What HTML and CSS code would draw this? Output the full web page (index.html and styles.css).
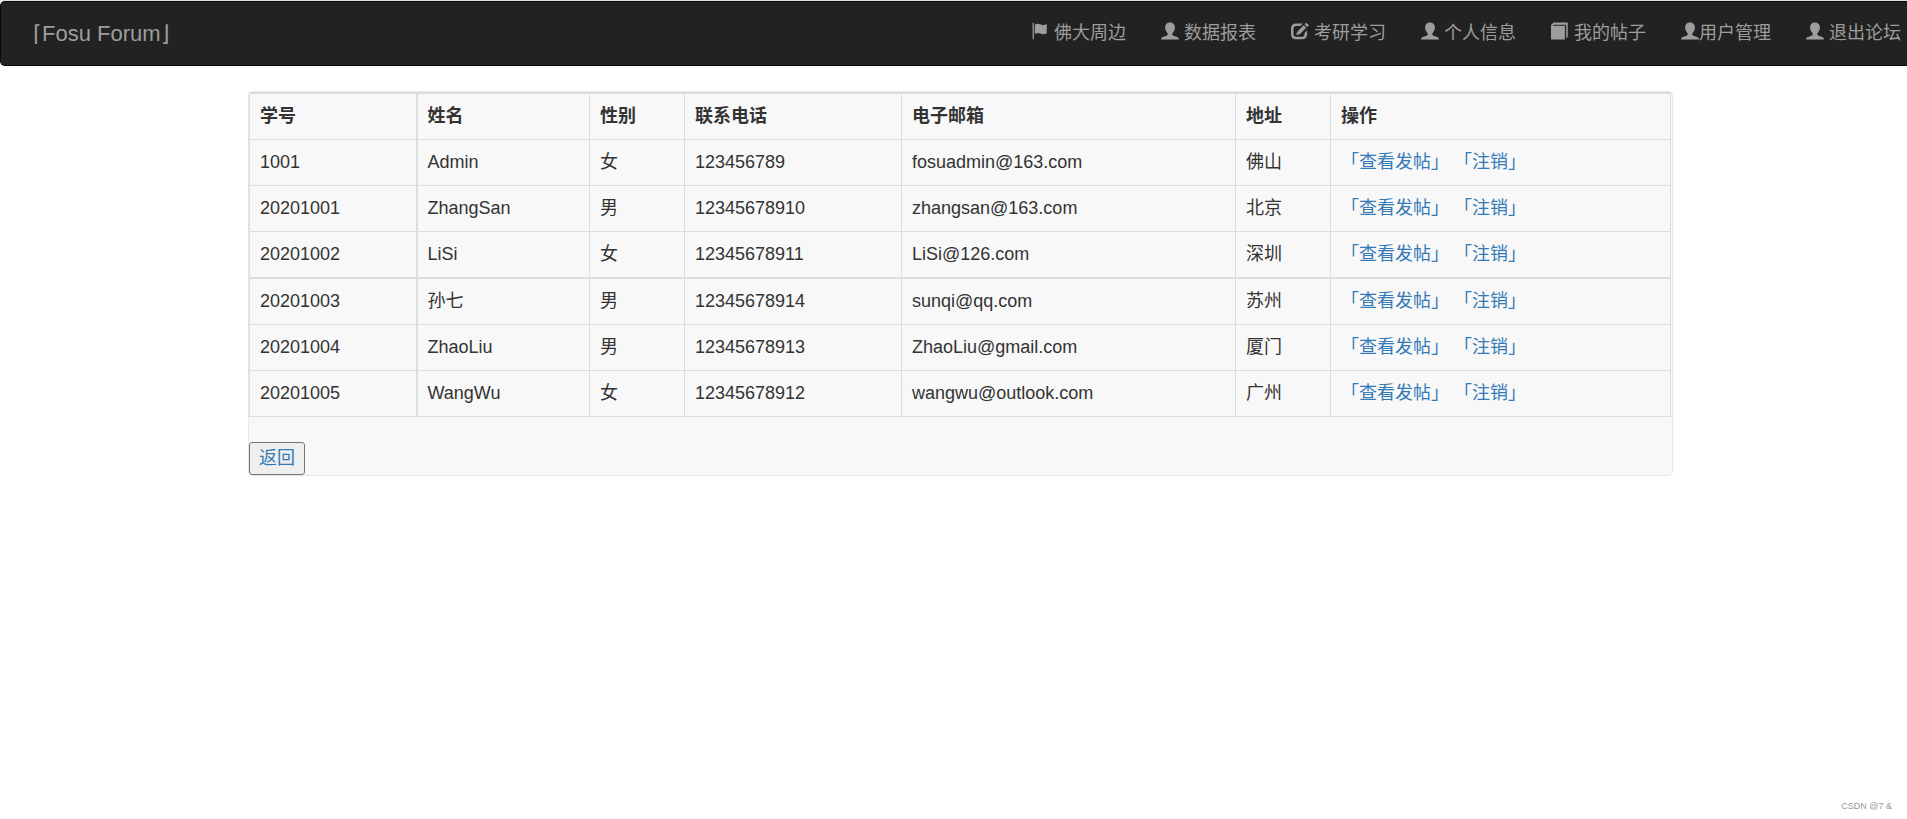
FILE: index.html
```html
<!DOCTYPE html>
<html lang="zh-CN">
<head>
<meta charset="utf-8">
<title>Fosu Forum</title>
<link rel="stylesheet" href="styles.css">
</head>
<body>
<svg class="sprite" aria-hidden="true">
  <symbol id="icon-user" viewBox="0 0 57 54"><path d="M28 0C19 0 13 6 13 15c0 8 3 14 8 19v4c0 3-3 4-6 5L6 46c-4 2-6 4-6 8h57c0-4-2-6-6-8l-9-3c-3-1-6-2-6-5v-4c5-5 8-11 8-19C44 6 37 0 28 0z"/></symbol>
  <symbol id="icon-flag" viewBox="0 0 57 54"><path d="M5 1h4v52H5zM12 7c5-4 11-4 17-1s12 4 21-1v29c-8 4-13 4-20 1s-12-3-18 2z"/></symbol>
  <symbol id="icon-edit" viewBox="0 0 57 54"><path d="M38 3H16C6 3 0 9 0 19v18c0 10 6 16 16 16h19c10 0 16-6 16-16V25l-8 8v4c0 5-3 8-8 8H16c-5 0-8-3-8-8V19c0-5 3-8 8-8h14zM40 9l8 8-20 20-12 3 4-11zM48 1l9 8-6 6-8-9z"/></symbol>
  <symbol id="icon-book" viewBox="0 0 57 54"><path d="M8 0h45v45l-5 6V7H9l-3 3h38v44H0V8z"/></symbol>
</svg>
<nav class="navbar">
  <a class="brand" href="#">⌈Fosu Forum⌋</a>
  <ul class="menu">
    <li><a href="#"><svg class="icon"><use href="#icon-flag"/></svg> 佛大周边</a></li>
    <li><a href="#"><svg class="icon"><use href="#icon-user"/></svg> 数据报表</a></li>
    <li><a href="#"><svg class="icon"><use href="#icon-edit"/></svg> 考研学习</a></li>
    <li><a href="#"><svg class="icon"><use href="#icon-user"/></svg> 个人信息</a></li>
    <li><a href="#"><svg class="icon"><use href="#icon-book"/></svg> 我的帖子</a></li>
    <li><a href="#"><svg class="icon"><use href="#icon-user"/></svg>用户管理</a></li>
    <li><a href="#"><svg class="icon"><use href="#icon-user"/></svg> 退出论坛</a></li>
  </ul>
</nav>
<main class="panel">
  <table class="users">
    <colgroup>
      <col class="col-id"><col class="col-name"><col class="col-short"><col class="col-phone"><col class="col-mail"><col class="col-short"><col class="col-actions">
    </colgroup>
    <thead>
      <tr><th>学号</th><th>姓名</th><th>性别</th><th>联系电话</th><th>电子邮箱</th><th>地址</th><th>操作</th></tr>
    </thead>
    <tbody>
      <tr><td>1001</td><td>Admin</td><td>女</td><td>123456789</td><td>fosuadmin@163.com</td><td>佛山</td><td><a href="#">「查看发帖」</a> <a href="#">「注销」</a></td></tr>
      <tr><td>20201001</td><td>ZhangSan</td><td>男</td><td>12345678910</td><td>zhangsan@163.com</td><td>北京</td><td><a href="#">「查看发帖」</a> <a href="#">「注销」</a></td></tr>
      <tr><td>20201002</td><td>LiSi</td><td>女</td><td>12345678911</td><td>LiSi@126.com</td><td>深圳</td><td><a href="#">「查看发帖」</a> <a href="#">「注销」</a></td></tr>
      <tr class="divided"><td>20201003</td><td>孙七</td><td>男</td><td>12345678914</td><td>sunqi@qq.com</td><td>苏州</td><td><a href="#">「查看发帖」</a> <a href="#">「注销」</a></td></tr>
      <tr><td>20201004</td><td>ZhaoLiu</td><td>男</td><td>12345678913</td><td>ZhaoLiu@gmail.com</td><td>厦门</td><td><a href="#">「查看发帖」</a> <a href="#">「注销」</a></td></tr>
      <tr><td>20201005</td><td>WangWu</td><td>女</td><td>12345678912</td><td>wangwu@outlook.com</td><td>广州</td><td><a href="#">「查看发帖」</a> <a href="#">「注销」</a></td></tr>
    </tbody>
  </table>
  <button class="back" type="button">返回</button>
</main>
<footer class="credit">CSDN @7 &amp;</footer>
</body>
</html>
```
FILE: styles.css
```css
* {
  box-sizing: border-box;
}

body {
  display: flex;
  flex-direction: column;
  min-height: 100vh;
  margin: 0;
  border-top: 1px solid #dde3e0;
  background: #fff;
  color: #333;
  font: 18px/25px "Liberation Sans", "Noto Sans CJK SC", sans-serif;
}

a {
  color: #337ab7;
  text-decoration: none;
}

.sprite {
  display: none;
}

.navbar {
  display: flex;
  align-items: center;
  justify-content: space-between;
  height: 65px;
  padding: 0 6px 0 32px;
  border: 1px solid #080808;
  border-right: 0;
  border-radius: 5px 0 0 5px;
  background: #222;
}

.navbar a {
  color: #9d9d9d;
  white-space: nowrap;
}

.brand {
  font-size: 22px;
}

.menu {
  display: flex;
  gap: 35px;
  margin: 0;
  padding: 0;
  list-style: none;
}

.icon {
  width: 18px;
  height: 18px;
  fill: currentColor;
  vertical-align: -1px;
}

.panel {
  margin: 25px 234px 0 248px;
  border: 1px solid #e7e7e7;
  border-radius: 5px;
  background: #f8f8f8;
}

.users {
  width: calc(100% - 1px);
  margin-bottom: 25px;
  border-collapse: collapse;
  table-layout: fixed;
}

.col-id {
  width: 167px;
}

.col-name {
  width: 173px;
}

.col-short {
  width: 95px;
}

.col-phone {
  width: 217px;
}

.col-mail {
  width: 334px;
}

.users th,
.users td {
  padding: 10px;
  border: 1px solid #ddd;
  text-align: left;
}

.users th {
  border-top-width: 2px;
}

.users th:first-child,
.users td:first-child {
  border-right-width: 2px;
}

.users .divided td {
  border-top-width: 2px;
}

.back {
  display: block;
  padding: 3px 9px;
  border: 1px solid #767676;
  border-radius: 3px;
  background: #efefef;
  color: #337ab7;
  font: inherit;
}

.credit {
  margin-top: auto;
  padding: 0 15px 7px;
  color: #999;
  font-size: 9px;
  line-height: 12px;
  text-align: right;
}
```
